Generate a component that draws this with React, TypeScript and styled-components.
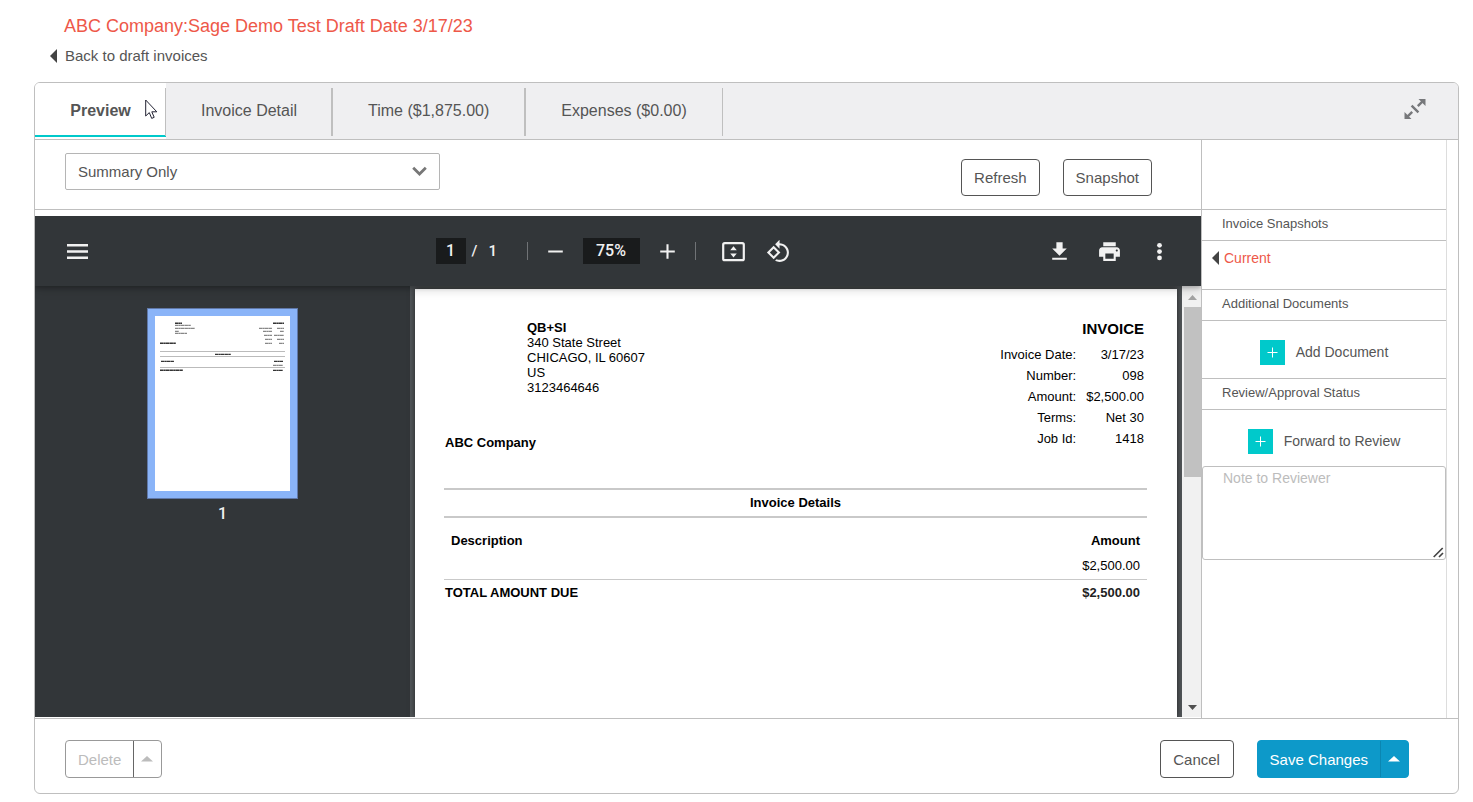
import React from "react";
import styled, { createGlobalStyle, css } from "styled-components";

const line = "#bfbfbf";
const ink = "#555555";
const arial = `"Liberation Sans", Arial, Helvetica, sans-serif`;
const roboto = `Roboto, "Liberation Sans", sans-serif`;

const GlobalStyle = createGlobalStyle`
  *, *::before, *::after { box-sizing: border-box; }
  body { margin: 0; background: #ffffff; color: ${ink}; font-family: ${arial}; font-size: 15px; }
  button, select, input, textarea { font-family: inherit; font-size: inherit; color: inherit; margin: 0; }
  button { cursor: pointer; }
`;

const Shell = styled.div`
  display: flex;
  flex-direction: column;
  min-height: 100vh;
  padding: 14px 14px 8px 34px;
`;

const PageHeader = styled.header`
  padding-bottom: 16px;
`;

const Title = styled.h1`
  margin: 0 0 8px 30px;
  font-size: 18px;
  line-height: 24px;
  font-weight: 400;
  color: #ee5849;
`;

const ArrowLink = styled.a<{ $current?: boolean }>`
  display: inline-flex;
  align-items: center;
  gap: ${(p) => (p.$current ? "5px" : "8px")};
  line-height: 20px;
  text-decoration: none;
  font-size: ${(p) => (p.$current ? "14px" : "15px")};
  color: ${(p) => (p.$current ? "#ee5849" : ink)};
`;

const BackRow = styled.div`
  display: flex;
  padding-left: 15px;
`;

const Panel = styled.main`
  flex: 1;
  display: flex;
  flex-direction: column;
  border: 1px solid ${line};
  border-radius: 6px;
  overflow: hidden;
`;

const TabBar = styled.div`
  position: relative;
  display: flex;
  height: 57px;
  background: #efeff1;
  border-bottom: 1px solid ${line};
`;

const Tab = styled.button<{ $active?: boolean; $first?: boolean }>`
  position: relative;
  height: 56px;
  min-width: 131px;
  padding: 0 ${(p) => (p.$first ? "35px" : "36px")};
  border: 0;
  background: ${(p) => (p.$active ? "#ffffff" : "transparent")};
  font-size: 16px;
  font-weight: ${(p) => (p.$active ? 700 : 400)};
  white-space: nowrap;

  &::after {
    content: "";
    position: absolute;
    inset: 5px 0 3px;
    border-right: 1px solid ${line};
    ${(p) => !p.$first && `border-left: 1px solid ${line};`}
  }
  ${(p) =>
    p.$active &&
    css`
      &::before {
        content: "";
        position: absolute;
        inset: auto 0 2px;
        height: 2px;
        background: #00c9cb;
      }
    `}
`;

const ExpandButton = styled.button`
  margin: 0 32px 4px auto;
  padding: 0;
  border: 0;
  background: none;
  display: flex;
  align-items: center;
`;

const Pointer = styled.svg`
  position: absolute;
  left: 110px;
  top: 16px;
  pointer-events: none;
`;

const Body = styled.div`
  flex: 1;
  display: flex;
  padding-right: 11px;
`;

const PreviewColumn = styled.section`
  flex: 1;
  min-width: 0;
  display: flex;
  flex-direction: column;
`;

const OptionsRow = styled.div`
  display: flex;
  justify-content: space-between;
  align-items: flex-start;
  height: 70px;
  padding: 13px 49px 0 30px;
  border-bottom: 1px solid ${line};
`;

const SelectBox = styled.div`
  position: relative;
  flex: 0 1 375px;

  svg {
    position: absolute;
    right: 13px;
    top: 13px;
    pointer-events: none;
  }
`;

const Select = styled.select`
  appearance: none;
  width: 100%;
  height: 37px;
  padding: 0 40px 0 12px;
  border: 1px solid #b5b5b5;
  border-radius: 2px;
  background: #ffffff;
`;

const ButtonGroup = styled.div<{ $drop?: boolean }>`
  display: flex;
  gap: 23px;
  padding-top: ${(p) => (p.$drop ? "6px" : "0")};
`;

const Button = styled.button`
  height: 37px;
  min-width: 74px;
  padding: 0 12px;
  border: 1px solid #555555;
  border-radius: 4px;
  background: #ffffff;
  white-space: nowrap;
`;

const CancelButton = styled(Button)`
  height: 38px;
`;

const SplitButton = styled.div<{ $primary?: boolean }>`
  display: flex;
  height: 38px;
  border: 1px solid ${(p) => (p.$primary ? "#0d99c9" : "#999999")};
  border-radius: 4px;
  overflow: hidden;
  background: ${(p) => (p.$primary ? "#0d99c9" : "#ffffff")};
  color: ${(p) => (p.$primary ? "#ffffff" : "#bcbcbc")};

  button {
    display: flex;
    align-items: center;
    border: 0;
    background: none;
    padding: 0 12px;
    color: inherit;
    white-space: nowrap;
  }
  button + button {
    padding: 0 8px 0 7px;
    border-left: 1px solid ${(p) => (p.$primary ? "#0b86b1" : "#666666")};
  }
`;

const Viewer = styled.div`
  flex: 1;
  display: flex;
  flex-direction: column;
  margin: 6px 0 1px;
  background: #525659;
  color: #f1f1f1;
  font-family: ${roboto};
  overflow: hidden;
`;

const ViewerBar = styled.div`
  position: relative;
  z-index: 1;
  display: flex;
  align-items: center;
  height: 70px;
  padding: 0 29px 0 30px;
  background: #323639;
  box-shadow: 0 2px 4px rgba(0, 0, 0, 0.22), 0 4px 10px rgba(0, 0, 0, 0.14);
`;

const BarSide = styled.div<{ $end?: boolean }>`
  flex: 1;
  display: flex;
  gap: 25px;
  justify-content: ${(p) => (p.$end ? "flex-end" : "flex-start")};
`;

const BarCenter = styled.div`
  display: flex;
  align-items: center;
  gap: 15px;
  padding-right: 11px;
`;

const FitGroup = styled.div`
  display: flex;
  gap: 20px;
  padding-left: 10px;
`;

const PageSelector = styled.div`
  display: flex;
  align-items: center;
  gap: 6px;
  width: 76px;
  font-size: 15px;
  font-weight: 500;
  line-height: 26px;
  white-space: pre;
`;

const BarField = styled.input<{ $wide?: boolean }>`
  width: ${(p) => (p.$wide ? "57px" : "30px")};
  height: 26px;
  padding: 0 0 2px;
  border: 0;
  background: #191b1c;
  text-align: center;
  font-size: 16px;
  font-weight: 500;
`;

const Rule = styled.span`
  width: 1px;
  height: 18px;
  background: #707376;
`;

const IconButton = styled.button`
  display: flex;
  width: 25px;
  height: 25px;
  padding: 0;
  border: 0;
  background: none;
  color: #f1f1f1;
  fill: currentColor;
`;

const ViewerContent = styled.div`
  flex: 1;
  display: flex;
`;

const ThumbStrip = styled.div`
  flex: 0 0 375px;
  display: flex;
  flex-direction: column;
  align-items: center;
  gap: 5px;
  padding-top: 22px;
  background: #323639;
  font-size: 16px;
  font-weight: 500;
  line-height: 20px;
`;

const Thumb = styled.button`
  display: flex;
  padding: 7px;
  border: 1px solid #6078a8;
  background: #8ab4f8;
`;

const Sheet = styled.article`
  flex: 1;
  margin: 3px 5px 0;
  padding: 31px 30px 40px 29px;
  background: #ffffff;
  color: #000000;
  font-family: ${arial};
  font-size: 13px;
  line-height: 15px;
  box-shadow: 0 0 6px rgba(0, 0, 0, 0.6);
`;

const SheetHead = styled.div`
  display: flex;
  justify-content: space-between;
  padding: 0 3px 0 1px;
  margin-bottom: 38px;
`;

const Address = styled.address`
  margin: 0 0 40px 82px;
  font-style: normal;
`;

const SheetTitle = styled.h2`
  margin: 0 0 6px;
  font-size: 15px;
  line-height: 18px;
  text-align: right;
`;

const Facts = styled.table`
  margin-left: auto;
  border-collapse: collapse;
  text-align: right;

  th, td {
    height: 21px;
    padding: 0 0 0 10px;
    font-weight: 400;
  }
`;

const Lines = styled.table`
  width: 100%;
  border-collapse: collapse;

  caption {
    padding: 5px 0 6px;
    border: solid #c9c9c9;
    border-width: 2px 0;
    font-weight: 700;
    margin-bottom: 9px;
  }
  th, td { padding: 0 7px; height: 26px; text-align: left; }
  th:last-child, td:last-child { text-align: right; }
  tfoot th, tfoot td { border-top: 1px solid #c9c9c9; font-weight: 700; }
  tfoot th { padding-left: 1px; }
  tfoot td { color: #222222; }
`;

const ScrollTrack = styled.div`
  width: 19px;
  display: flex;
  flex-direction: column;
  background: #f1f1f1;

  > svg:last-child { margin-top: auto; }
`;

const ScrollThumb = styled.div`
  height: 170px;
  margin-left: 2px;
  background: #c1c1c1;
`;

const Aside = styled.aside`
  flex: 0 0 246px;
  border: solid ${line};
  border-width: 0 1px;
  border-right-color: #dddddd;
`;

const AsideSpacer = styled.div`
  height: 70px;
  border-bottom: 1px solid ${line};
`;

const AsideTitle = styled.h3`
  margin: 0;
  padding: 6px 20px 8px;
  border-bottom: 1px solid ${line};
  font-size: 13px;
  line-height: 16px;
  font-weight: 400;
`;

const CurrentRow = styled.div`
  height: 49px;
  padding: 7px 9px;
  border-bottom: 1px solid ${line};
`;

const ActionRow = styled.div<{ $last?: boolean }>`
  display: flex;
  justify-content: center;
  padding: 19px 0 ${(p) => (p.$last ? "12px" : "13px")};
  border-bottom: ${(p) => (p.$last ? "0" : `1px solid ${line}`)};
`;

const AddButton = styled.button`
  display: flex;
  align-items: center;
  gap: 11px;
  padding: 0;
  border: 0;
  background: none;
  font-size: 14px;
  line-height: 25px;
`;

const NoteBox = styled.div`
  position: relative;

  svg {
    position: absolute;
    right: 2px;
    bottom: 2px;
    pointer-events: none;
  }
`;

const Note = styled.textarea`
  display: block;
  width: 100%;
  height: 94px;
  padding: 3px 20px;
  border: 1px solid ${line};
  border-radius: 3px;
  resize: none;
  font-size: 14px;
  line-height: 16px;

  &::placeholder { color: #bcbcbc; opacity: 1; }
`;

const Footer = styled.footer`
  display: flex;
  justify-content: space-between;
  padding: 21px 49px 15px 30px;
  border-top: 1px solid ${line};
`;

const LeftArrow = () => (
  <svg width="8" height="14" viewBox="0 0 8 14" aria-hidden="true">
    <path d="M8 0v14L1 7z" fill="#444" />
  </svg>
);

const Caret = () => (
  <svg width="12" height="6" viewBox="0 0 12 6" aria-hidden="true">
    <path d="M0 5.5L6 0l6 5.5z" fill="currentColor" />
  </svg>
);

const Plus = () => (
  <svg width="25" height="25" viewBox="0 0 25 25" aria-hidden="true">
    <path d="M0 0h25v25H0z" fill="#00c9cb" />
    <path d="M12.5 7.5v10M7.5 12.5h10" stroke="#fff" strokeWidth="1" />
  </svg>
);

const Glyph = ({ d }: { d: string }) => (
  <svg width="25" height="25" viewBox="0 0 24 24" aria-hidden="true">
    <path d={d} />
  </svg>
);

const glyphs = {
  minus: "M19 13H5v-2h14v2z",
  plus: "M19 13h-6v6h-2v-6H5v-2h6V5h2v6h6v2z",
  rotate:
    "M7.34 6.41L.86 12.9l6.49 6.48 6.49-6.48-6.5-6.49zM3.69 12.9l3.66-3.66L11 12.9l-3.66 3.66-3.65-3.66zm15.67-6.26C17.61 4.88 15.3 4 13 4V.76L8.76 5 13 9.24V6c1.79 0 3.58.68 4.95 2.05 2.73 2.73 2.73 7.17 0 9.9C16.58 19.32 14.79 20 13 20c-.97 0-1.94-.21-2.84-.61l-1.49 1.49C10.02 21.62 11.51 22 13 22c2.3 0 4.61-.88 6.36-2.64 3.52-3.51 3.52-9.21 0-12.72z",
  download: "M19 9h-4V3H9v6H5l7 7 7-7zM5 18v2h14v-2H5z",
  print:
    "M19 8H5c-1.66 0-3 1.34-3 3v6h4v4h12v-4h4v-6c0-1.66-1.34-3-3-3zm-3 11H8v-5h8v5zm3-7c-.55 0-1-.45-1-1s.45-1 1-1 1 .45 1 1-.45 1-1 1zm-1-9H6v4h12V3z",
};

/* Greeked copy of the invoice: each entry is x, y, width, weight. */
const greek: [number, number, number, number][] = [
  [20, 7, 7, 1.4], [20, 9, 16, 0.9], [20, 12, 20, 0.9], [20, 15, 4, 0.9], [20, 17, 12, 0.9],
  [5, 27, 16, 1.4], [118, 7, 11, 1.5], [104, 12, 13, 0.9], [122, 12, 7, 0.9],
  [108, 15, 9, 0.9], [125, 15, 4, 0.9], [109, 19, 8, 0.9], [119, 19, 10, 0.9],
  [110, 23, 7, 0.9], [122, 23, 7, 0.9], [110, 27, 7, 0.9], [124, 27, 5, 0.9],
  [60, 38, 16, 1.3], [6, 45, 13, 1.3], [119, 45, 9, 1.3], [118, 49, 10, 0.9],
  [5, 54, 23, 1.4], [118, 54, 10, 1.3],
];

const ThumbPage = () => (
  <svg width="135" height="175" viewBox="0 0 135 175" aria-hidden="true">
    <path d="M0 0h135v175H0z" fill="#fff" />
    {greek.map(([x, y, w, h]) => (
      <path
        key={`${x}-${y}`}
        d={`M${x} ${y + 0.3}h${w}`}
        stroke="#111"
        strokeOpacity={h > 1 ? 0.85 : 0.7}
        strokeWidth={h}
        strokeDasharray="3.1 .25 1.9 .2 4.100 .3"
      />
    ))}
    <path d="M5 35.5h125M5 40.5h125M5 51.5h125" stroke="#bbb" strokeWidth="1" />
  </svg>
);

const tabs = ["Preview", "Invoice Detail", "Time ($1,875.00)", "Expenses ($0.00)"];

const facts = [
  ["Invoice Date:", "3/17/23"],
  ["Number:", "098"],
  ["Amount:", "$2,500.00"],
  ["Terms:", "Net 30"],
  ["Job Id:", "1418"],
];

const PdfToolbar = () => (
  <ViewerBar>
    <BarSide>
      <IconButton aria-label="Menu">
        <svg width="25" height="25" viewBox="0 0 25 25" aria-hidden="true">
          <path d="M2 5h21v2.6H2zM2 11.2h21v2.6H2zM2 17.4h21V20H2z" />
        </svg>
      </IconButton>
    </BarSide>
    <BarCenter>
      <PageSelector>
        <BarField aria-label="Page number" defaultValue="1" />
        <span>{"/   1"}</span>
      </PageSelector>
      <Rule />
      <IconButton aria-label="Zoom out"><Glyph d={glyphs.minus} /></IconButton>
      <BarField $wide aria-label="Zoom level" defaultValue="75%" />
      <IconButton aria-label="Zoom in"><Glyph d={glyphs.plus} /></IconButton>
      <Rule />
      <FitGroup>
        <IconButton aria-label="Fit to page">
          <svg width="25" height="25" viewBox="0 0 25 25" aria-hidden="true">
            <rect x="2.2" y="4.2" width="20.6" height="17" rx="1.5" fill="none" stroke="currentColor" strokeWidth="2.2" />
            <path d="M12.5 7.2l3.3 4H9.2zM12.5 18.4l3.3-4H9.2z" />
          </svg>
        </IconButton>
        <IconButton aria-label="Rotate counterclockwise"><Glyph d={glyphs.rotate} /></IconButton>
      </FitGroup>
    </BarCenter>
    <BarSide $end>
      <IconButton aria-label="Download"><Glyph d={glyphs.download} /></IconButton>
      <IconButton aria-label="Print"><Glyph d={glyphs.print} /></IconButton>
      <IconButton aria-label="More actions">
        <svg width="25" height="25" viewBox="0 0 25 25" aria-hidden="true">
          <circle cx="12.5" cy="6.3" r="2.4" />
          <circle cx="12.5" cy="12.6" r="2.4" />
          <circle cx="12.5" cy="18.9" r="2.4" />
        </svg>
      </IconButton>
    </BarSide>
  </ViewerBar>
);

const Invoice = () => (
  <Sheet>
    <SheetHead>
      <div>
        <Address>
          <strong>QB+SI</strong><br />
          340 State Street<br />
          CHICAGO, IL 60607<br />
          US<br />
          3123464646
        </Address>
        <strong>ABC Company</strong>
      </div>
      <div>
        <SheetTitle>INVOICE</SheetTitle>
        <Facts>
          <tbody>
            {facts.map(([name, value]) => (
              <tr key={name}>
                <th scope="row">{name}</th>
                <td>{value}</td>
              </tr>
            ))}
          </tbody>
        </Facts>
      </div>
    </SheetHead>
    <Lines>
      <caption>Invoice Details</caption>
      <thead>
        <tr><th>Description</th><th>Amount</th></tr>
      </thead>
      <tbody>
        <tr><td /><td>$2,500.00</td></tr>
      </tbody>
      <tfoot>
        <tr><th scope="row">TOTAL AMOUNT DUE</th><td>$2,500.00</td></tr>
      </tfoot>
    </Lines>
  </Sheet>
);

export default function App() {
  return (
    <Shell>
      <GlobalStyle />
      <PageHeader>
        <Title>ABC Company:Sage Demo Test Draft Date 3/17/23</Title>
        <BackRow>
          <ArrowLink href="#drafts"><LeftArrow />Back to draft invoices</ArrowLink>
        </BackRow>
      </PageHeader>

      <Panel>
        <TabBar>
          {tabs.map((name, i) => (
            <Tab key={name} $active={i === 0} $first={i < 2}>{name}</Tab>
          ))}
          <ExpandButton aria-label="Expand">
            <svg width="22" height="22" viewBox="0 0 22 22" fill="none" stroke="#77787b" strokeWidth="2.4" aria-hidden="true">
              <path d="M13.800 8.200l5-5M8.200 13.800l-5 5M7.600 7.600l6.800 6.800" />
              <path d="M14.500 1h7v7l-2.300-2.300-2.400-2.400zM7.500 21h-7v-7l2.300 2.300 2.400 2.400z" fill="#77787b" stroke="none" />
            </svg>
          </ExpandButton>
          <Pointer width="13" height="21" viewBox="0 0 13 21" aria-hidden="true">
            <path d="M.7 1v16l3.600-3.400 2.400 5.800 2.500-1.100-2.400-5.500h5z" fill="#fff" stroke="#223" strokeWidth="1" />
          </Pointer>
        </TabBar>

        <Body>
          <PreviewColumn>
            <OptionsRow>
              <SelectBox>
                <Select aria-label="Preview layout" defaultValue="summary">
                  <option value="summary">Summary Only</option>
                </Select>
                <svg width="15" height="11" viewBox="0 0 15 11" aria-hidden="true">
                  <path d="M1.200 1.800l6.300 6.200 6.300-6.200" fill="none" stroke="#777" strokeWidth="2.800" />
                </svg>
              </SelectBox>
              <ButtonGroup $drop>
                <Button>Refresh</Button>
                <Button>Snapshot</Button>
              </ButtonGroup>
            </OptionsRow>

            <Viewer>
              <PdfToolbar />
              <ViewerContent>
                <ThumbStrip>
                  <Thumb aria-label="Page thumbnail"><ThumbPage /></Thumb>
                  <span>1</span>
                </ThumbStrip>
                <Invoice />
                <ScrollTrack>
                  <svg width="19" height="21" viewBox="0 0 19 21" aria-hidden="true">
                    <path d="M6 14l4.500-5 4.500 5z" fill="#a3a3a3" />
                  </svg>
                  <ScrollThumb />
                  <svg width="19" height="21" viewBox="0 0 19 21" aria-hidden="true">
                    <path d="M6 9l4.500 5 4.500-5z" fill="#505050" />
                  </svg>
                </ScrollTrack>
              </ViewerContent>
            </Viewer>
          </PreviewColumn>

          <Aside>
            <AsideSpacer />
            <AsideTitle>Invoice Snapshots</AsideTitle>
            <CurrentRow>
              <ArrowLink $current href="#current"><LeftArrow />Current</ArrowLink>
            </CurrentRow>
            <AsideTitle>Additional Documents</AsideTitle>
            <ActionRow>
              <AddButton><Plus />Add Document</AddButton>
            </ActionRow>
            <AsideTitle>Review/Approval Status</AsideTitle>
            <ActionRow $last>
              <AddButton><Plus />Forward to Review</AddButton>
            </ActionRow>
            <NoteBox>
              <Note aria-label="Note to Reviewer" placeholder="Note to Reviewer" />
              <svg width="11" height="11" viewBox="0 0 11 11" aria-hidden="true">
                <path d="M.7 10l9-9M6 10l4-4" stroke="#444" strokeWidth="1.700" />
              </svg>
            </NoteBox>
          </Aside>
        </Body>

        <Footer>
          <SplitButton>
            <button disabled>Delete</button>
            <button disabled aria-label="More delete options"><Caret /></button>
          </SplitButton>
          <ButtonGroup>
            <CancelButton>Cancel</CancelButton>
            <SplitButton $primary>
              <button>Save Changes</button>
              <button aria-label="More save options"><Caret /></button>
            </SplitButton>
          </ButtonGroup>
        </Footer>
      </Panel>
    </Shell>
  );
}
